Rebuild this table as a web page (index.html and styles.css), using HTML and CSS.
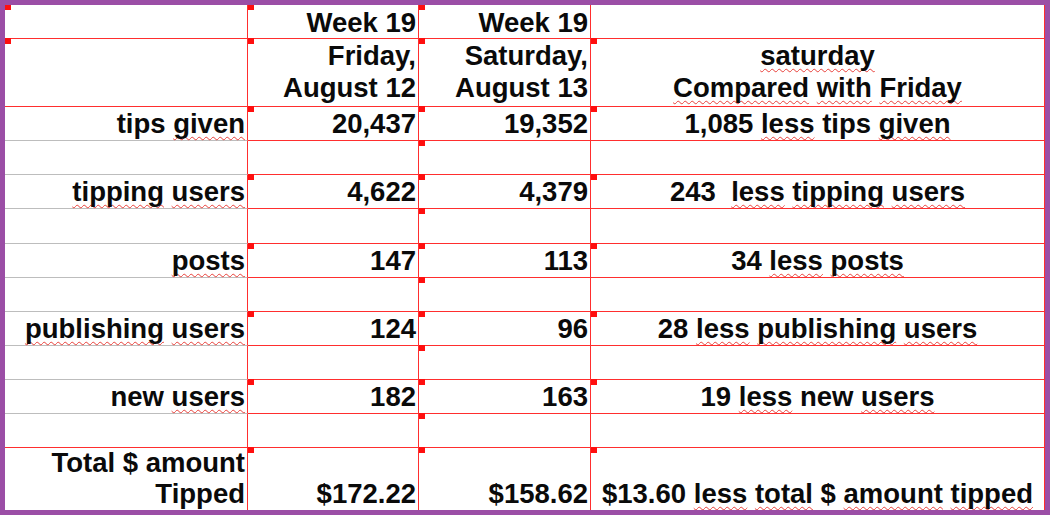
FILE: index.html
```html
<!DOCTYPE html>
<html lang="en">
<head>
<meta charset="utf-8">
<title>Week 19 comparison</title>
<link rel="stylesheet" href="styles.css">
</head>
<body>
<div class="frame">
  <div class="sheet">
    <!-- row 1 -->
    <div class="c a r1 red-b"><i class="m"></i></div>
    <div class="c r1"><i class="m"></i>Week 19</div>
    <div class="c r1"><i class="m"></i>Week 19</div>
    <div class="c d r1"></div>
    <!-- row 2 -->
    <div class="c a red-b"><i class="m"></i></div>
    <div class="c hd"><i class="m"></i>Friday,<br>August 12</div>
    <div class="c hd"><i class="m"></i>Saturday,<br>August 13</div>
    <div class="c d hd"><i class="m"></i><span><span class="sp">saturday</span><br><span class="sp">Compared</span> <span class="sp">with</span> <span class="sp">Friday</span></span></div>
    <!-- tips given -->
    <div class="c a">tips&nbsp;<span class="sp">given</span></div>
    <div class="c"><i class="m"></i>20,437</div>
    <div class="c"><i class="m"></i>19,352</div>
    <div class="c d"><i class="m"></i><span>1,085 <span class="sp">less</span> tips <span class="sp">given</span></span></div>
    <div class="c a"></div><div class="c"></div><div class="c"><i class="m"></i></div><div class="c d"></div>
    <!-- tipping users -->
    <div class="c a"><span><span class="sp">tipping</span> <span class="sp">users</span></span></div>
    <div class="c"><i class="m"></i>4,622</div>
    <div class="c"><i class="m"></i>4,379</div>
    <div class="c d pre"><i class="m"></i><span>243  <span class="sp">less</span> <span class="sp">tipping</span> <span class="sp">users</span></span></div>
    <div class="c a"></div><div class="c"></div><div class="c"><i class="m"></i></div><div class="c d"></div>
    <!-- posts -->
    <div class="c a"><span class="sp">posts</span></div>
    <div class="c"><i class="m"></i>147</div>
    <div class="c"><i class="m"></i>113</div>
    <div class="c d"><i class="m"></i><span>34 <span class="sp">less</span> <span class="sp">posts</span></span></div>
    <div class="c a"></div><div class="c"></div><div class="c"><i class="m"></i></div><div class="c d"></div>
    <!-- publishing users -->
    <div class="c a"><span><span class="sp">publishing</span> <span class="sp">users</span></span></div>
    <div class="c"><i class="m"></i>124</div>
    <div class="c"><i class="m"></i>96</div>
    <div class="c d"><i class="m"></i><span>28 <span class="sp">less</span> <span class="sp">publishing</span> <span class="sp">users</span></span></div>
    <div class="c a"></div><div class="c"></div><div class="c"><i class="m"></i></div><div class="c d"></div>
    <!-- new users -->
    <div class="c a"><span>new <span class="sp">users</span></span></div>
    <div class="c"><i class="m"></i>182</div>
    <div class="c"><i class="m"></i>163</div>
    <div class="c d"><i class="m"></i><span>19 <span class="sp">less</span> new <span class="sp">users</span></span></div>
    <div class="c a red-b"></div><div class="c"></div><div class="c"><i class="m"></i></div><div class="c d"></div>
    <!-- total -->
    <div class="c a last">Total $ amount<br>Tipped</div>
    <div class="c last"><i class="m"></i>$172.22</div>
    <div class="c last"><i class="m"></i>$158.62</div>
    <div class="c d last"><i class="m"></i><span>$13.60 <span class="sp">less</span> <span class="sp">total</span> $ <span class="sp">amount</span> <span class="sp">tipped</span></span></div>
  </div>
</div>
</body>
</html>
```

FILE: styles.css
```css
html, body {
  margin: 0;
  padding: 0;
  background: #ffffff;
}

.frame {
  width: 1050px;
  height: 515px;
  box-sizing: border-box;
  border: 5px solid #9b4ea6;
  background: #ffffff;
  overflow: hidden;
}

.sheet {
  display: grid;
  grid-template-columns: 243px 171px 172px 454px;
  grid-template-rows: 34px 68px 34px 34px 34px 35px 34px 34px 34px 34px 34px 34px 62px;
  font-family: "Liberation Sans", Arial, sans-serif;
  font-weight: bold;
  font-size: 27.5px;
  color: #0a0a0a;
}

.c {
  position: relative;
  box-sizing: border-box;
  border-right: 1px solid #ff2e2e;
  border-bottom: 1px solid #ff2e2e;
  display: flex;
  align-items: flex-end;
  justify-content: flex-end;
  text-align: right;
  padding: 0 2px 1px 2px;
  line-height: 31px;
  white-space: nowrap;
}

.c.a {
  border-bottom-color: #bdbdbd;
}

.c.a.red-b {
  border-bottom-color: #ff2e2e;
}

.c.r1 {
  padding-bottom: 0;
}

.c.hd {
  line-height: 32px;
  padding-bottom: 2px;
}

.c.d {
  justify-content: center;
  text-align: center;
}

.c.pre {
  white-space: pre;
}

.c.last {
  border-bottom: none;
}

.m {
  position: absolute;
  left: 0;
  top: -1px;
  width: 6px;
  height: 6px;
  background: #ff0f0f;
}

.sp {
  text-decoration: underline wavy #e8403a;
  text-decoration-thickness: 1px;
  text-underline-offset: 3px;
  text-decoration-skip-ink: none;
}
```
